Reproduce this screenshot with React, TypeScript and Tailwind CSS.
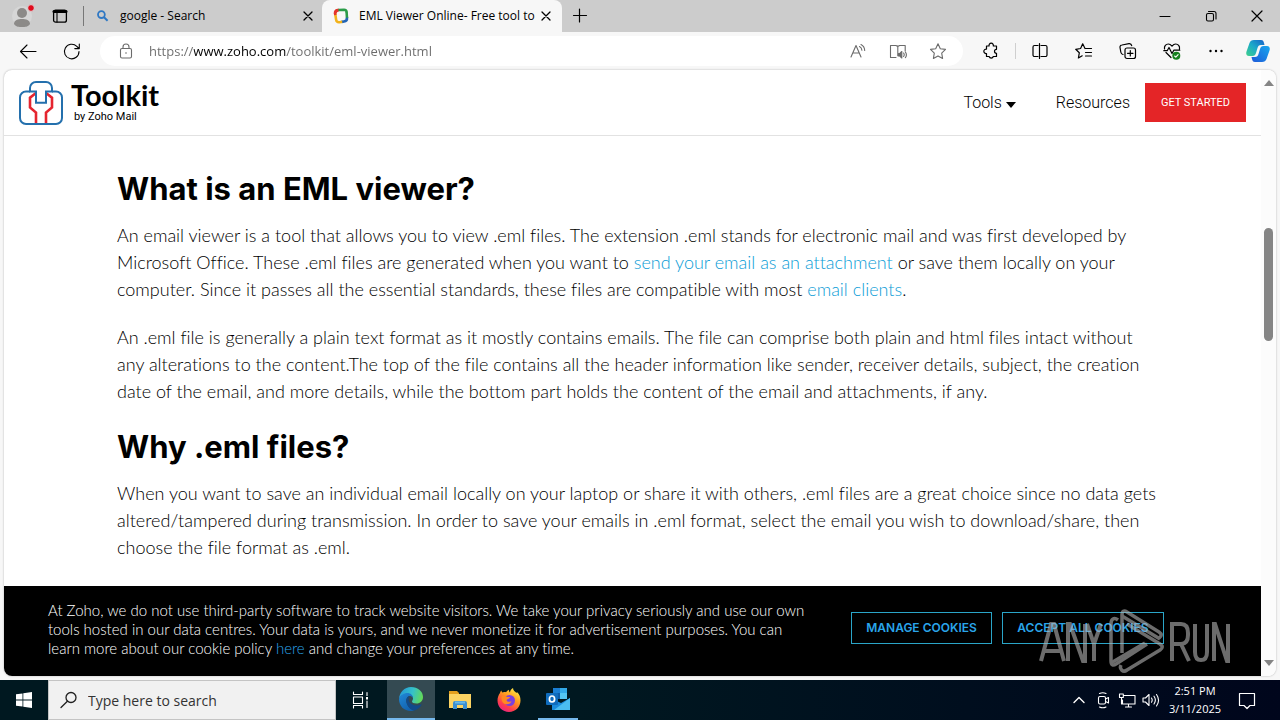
import type { ReactNode } from "react";

type IconProps = { children: ReactNode; className?: string; box?: string };

function Icon({ children, className = "size-5", box = "0 0 20 20" }: IconProps) {
  return (
    <svg
      viewBox={box}
      className={`shrink-0 ${className}`}
      fill="none"
      stroke="currentColor"
      strokeWidth="1.1"
      strokeLinecap="round"
      strokeLinejoin="round"
      aria-hidden="true"
    >
      {children}
    </svg>
  );
}

const CloseIcon = () => (
  <Icon className="size-3" box="0 0 12 12">
    <path d="M2 2l8 8M10 2l-8 8" strokeWidth="1.3" />
  </Icon>
);

function TabStrip() {
  return (
    <header className="flex h-8 shrink-0 bg-[#cccccc] text-black">
      <button aria-label="Profile" className="relative ml-3 flex w-6 items-center">
        <svg viewBox="0 0 24 28" className="h-7 w-6" aria-hidden="true">
          <circle cx="10" cy="14" r="10" fill="#d6d6d6" />
          <circle cx="10" cy="11" r="5" fill="#8c8a88" />
          <path d="M2 22c0-4 4-5 8-5s8 1 8 5c-2 3-5 3-8 3s-6 0-8-3z" fill="#8c8a88" />
          <circle cx="19" cy="6" r="3.4" fill="#e00b1c" stroke="#dcdcdc" />
        </svg>
      </button>
      <button aria-label="Tab actions menu" className="ml-4 flex items-center">
        <Icon className="size-4" box="0 0 16 16">
          <rect x="1.6" y="2.2" width="12.8" height="12" rx="2" strokeWidth="1.3" />
          <path d="M2 3.6h12" strokeWidth="3" />
          <path d="M5 5v9" />
        </Icon>
      </button>
      <span className="my-1.5 ml-[15px] w-px bg-[#777777]" />
      <div className="flex w-[238px] items-center pr-2 pl-3 text-xs">
        <svg viewBox="0 0 14 14" className="size-3.5 text-[#2f78c4]" fill="none" stroke="currentColor" aria-hidden="true">
          <circle cx="5.4" cy="5.6" r="3.4" strokeWidth="1.8" />
          <path d="M8 8.2l3.6 3.6" strokeWidth="2" />
        </svg>
        <span className="ml-2.5 flex-1 whitespace-nowrap">google - Search</span>
        <button aria-label="Close google - Search">
          <CloseIcon />
        </button>
      </div>
      <div className="flex w-60 items-center rounded-t-lg bg-[#f7f7f7] pr-2.5 pl-[11px] text-xs">
        <svg viewBox="0 0 16 16" className="size-4 shrink-0" fill="none" strokeWidth="2.6" aria-hidden="true">
          <path d="M2.2 5.4C2.6 3 4 2.2 6 1.9" stroke="#e5352c" />
          <path d="M5.4 2L11 1.8c1.800 0 2.600.8 2.700 2.600" stroke="#2a9c48" />
          <path d="M13.600 4l.4 6.200" stroke="#2a9c48" />
          <path d="M14 9.600c.2 2.400-.8 3.600-3 3.900L8.600 13.900" stroke="#2264b5" />
          <path d="M9.200 13.800l-2.600.4c-2 .2-3.200-.6-3.500-2.600L2.100 5" stroke="#f2b21b" />
          <path d="M2.400 7L2 5.200C2 3.600 3 2.300 4.600 2" stroke="#e5352c" />
        </svg>
        <span className="ml-2.5 flex-1 whitespace-nowrap">EML Viewer Online- Free tool to</span>
        <button aria-label="Close EML Viewer Online">
          <CloseIcon />
        </button>
      </div>
      <button aria-label="New tab" className="ml-2 flex items-center">
        <Icon className="size-5">
          <path d="M3.500 9.500h13M9.500 3v13" strokeWidth="1.2" />
        </Icon>
      </button>
      <div className="ml-auto flex items-center gap-[30px] pr-[15px]">
        <button aria-label="Minimize">
          <Icon className="size-4" box="0 0 16 16">
            <path d="M3 8.500h10" />
          </Icon>
        </button>
        <button aria-label="Restore">
          <Icon className="size-4" box="0 0 16 16">
            <rect x="3.500" y="5.500" width="7" height="7.500" rx="1.500" />
            <path d="M5.500 3.500h5.500a2 2 0 0 1 2 2v5.500" />
          </Icon>
        </button>
        <button aria-label="Close window">
          <Icon className="size-4" box="0 0 16 16">
            <path d="M3 3l10 10M13 3L3 13" strokeWidth="1.200" />
          </Icon>
        </button>
      </div>
    </header>
  );
}

function AddressBar() {
  return (
    <nav className="flex h-[38px] shrink-0 items-center bg-[#f7f7f7] pl-[18px] text-black" aria-label="Browser">
      <button aria-label="Back">
        <Icon>
          <path d="M18 10.500H2.500M9 4L2.500 10.500 9 17" />
        </Icon>
      </button>
      <button aria-label="Refresh" className="ml-6">
        <Icon>
          <path d="M17 10.500a7.300 7.300 0 1 1-2.200-5.200L17 7.500M17.300 3v4.600h-4.500" />
        </Icon>
      </button>
      <label className="ml-[18px] flex h-[30px] min-w-0 flex-1 items-center rounded-full bg-white pr-[15px] pl-4 text-[#6b6b6b]">
        <Icon>
          <rect x="4.500" y="7.500" width="11" height="9.500" rx="1.500" />
          <path d="M7 7.500V6a3 3 0 0 1 6 0v1.500" />
          <circle cx="10" cy="12" r=".8" fill="currentColor" stroke="none" />
        </Icon>
        <input
          aria-label="Address"
          defaultValue="https://www.zoho.com/toolkit/eml-viewer.html"
          className="ml-[13px] min-w-0 flex-1 bg-[linear-gradient(to_right,#6b6b6b_45px,#000_45px,#000_137px,#6b6b6b_137px)] bg-clip-text pt-px text-[13px] text-transparent outline-none"
        />
        <span className="flex items-center gap-5">
          <Icon>
            <path d="M3 16L8 4.500 13 16M4.700 12h6.600" />
            <path d="M11.500 5.500c1.500.8 2.300 2 2.400 3.700M13 3.500c2.300 1.200 3.600 3.200 3.700 6" />
          </Icon>
          <Icon>
            <path d="M9.800 4.800v10M8 16.500H2.500v-12H8l1.800 1 1.800-1h5.600V10" />
            <path d="M10.500 12.500h1.300l2-2v6.500l-2-2h-1.300z" fill="currentColor" />
            <path d="M15.600 12c.7 1 .7 2.500 0 3.500M17.400 11c1.200 1.800 1.200 4 0 5.600" />
          </Icon>
          <Icon>
            <path d="M10 2.800l2.300 4.900 5.200.7-3.800 3.700.9 5.300L10 14.900l-4.600 2.500.9-5.300-3.800-3.700 5.200-.7z" />
          </Icon>
        </span>
      </label>
      <div className="ml-[18px] flex items-center">
        <button aria-label="Extensions">
          <Icon>
            <path d="M5.500 5h2.600a2.200 2.200 0 1 1 4.200 0h3.200v3.300a2 2 0 1 0 0 4v3.200h-3.200a2.200 2.200 0 0 1-4.200 0H5.500v-3a2.200 2.200 0 1 1 0-4.300z" strokeWidth="1.200" />
          </Icon>
        </button>
        <span className="ml-3.5 h-4 w-px bg-[#cfcfcf]" />
        <button aria-label="Split screen" className="ml-3.5">
          <Icon>
            <path d="M8 4.500H4.500a1.500 1.500 0 0 0-1.500 1.500v8a1.500 1.500 0 0 0 1.500 1.500H8M11 4.500h4.500A1.500 1.500 0 0 1 17 6v8a1.500 1.500 0 0 1-1.500 1.500H11M9.500 2.500v15" strokeWidth="1.200" />
          </Icon>
        </button>
        <button aria-label="Favorites" className="ml-6">
          <Icon>
            <path d="M11 7.500L8.700 2.800 6.600 7.500l-4.900.8 3.600 3.500-.9 5.200 3.800-2.200M11 7.500h6.500M11.500 11.500h6M11.500 15h6" strokeWidth="1.200" />
          </Icon>
        </button>
        <button aria-label="Collections" className="ml-6">
          <Icon>
            <rect x="7" y="7" width="10.500" height="10.500" rx="2" strokeWidth="1.200" />
            <path d="M12.300 9.500v5.500M9.500 12.300H15M5 13.500C3 13 3 12 2.800 11L2 6.500C1.800 5 2.500 4.200 4 4l7-1.300c1.600-.2 2.400.5 2.700 2" strokeWidth="1.200" />
          </Icon>
        </button>
        <button aria-label="Browser essentials" className="ml-6">
          <Icon>
            <path d="M2.500 8c-.5-3 1.500-5 3.800-5C8 3 9 4 10 5.200 11 4 12 3 13.700 3c2.300 0 4.300 2 3.800 5M4 11.500l5 5M1.800 9.700h3.400L7 6.500l3 6 1.800-3.300h6" strokeWidth="1.200" />
            <circle cx="14.300" cy="14.700" r="4" fill="#16801f" stroke="none" />
            <path d="M12.600 15l1.200 1.100 2.300-2.500" stroke="#fff" />
          </Icon>
        </button>
        <button aria-label="Settings and more" className="ml-6">
          <Icon>
            <g fill="currentColor" stroke="none">
              <circle cx="4.500" cy="10" r="1.200" />
              <circle cx="10" cy="10" r="1.200" />
              <circle cx="15.500" cy="10" r="1.200" />
            </g>
          </Icon>
        </button>
        <button aria-label="Copilot" className="mr-2.5 ml-5">
          <svg viewBox="0 0 24 24" className="size-6" aria-hidden="true">
            <defs>
              <linearGradient id="cpa" x1="0" y1="1" x2="1" y2="0">
                <stop offset="0" stopColor="#3fd08b" />
                <stop offset=".5" stopColor="#1ba9c9" />
                <stop offset="1" stopColor="#1660c9" />
              </linearGradient>
              <linearGradient id="cpb" x1="0" y1="1" x2="1" y2="0">
                <stop offset="0" stopColor="#1d59d8" />
                <stop offset="1" stopColor="#18a7ee" />
              </linearGradient>
            </defs>
            <path d="M8 1h7c2 0 2.500 1 3 3l.5 2H15c-2 0-3 1-3.500 3l-1.500 5c-.6 2-1.500 3-3.500 3H3c-2.500 0-3.300-2-2.500-4.500L3.500 4C4.300 2 5.500 1 8 1z" fill="url(#cpa)" />
            <path d="M16 23H9c-2 0-2.500-1-3-3l-.5-2H9c2 0 3-1 3.500-3L14 10c.6-2 1.500-3 3.500-3H21c2.500 0 3.300 2 2.500 4.500L20.500 20c-.8 2-2 3-4.500 3z" fill="url(#cpb)" />
          </svg>
        </button>
      </div>
    </nav>
  );
}

function SiteHeader() {
  return (
    <header className="flex h-[66px] shrink-0 items-center border-b border-[#e2e2e2] px-[15px] text-black">
      <a href="#toolkit" className="flex items-center">
        <svg viewBox="0 0 44 44" className="size-11" fill="none" strokeWidth="2" aria-hidden="true">
          <path d="M17 43V31.500l-6-5v-9.800l6-4.700M27 43V31.500l6-5v-9.800L27 12" stroke="#e5252f" strokeWidth="2.600" />
          <g stroke="#2470ad">
            <path d="M11 10.500H7a6 6 0 0 0-6 6V37a6 6 0 0 0 6 6h30a6 6 0 0 0 6-6V16.500a6 6 0 0 0-6-6h-4" />
            <path d="M17 10.500h-6V7a6 6 0 0 1 6-6h10a6 6 0 0 1 6 6v3.500h-6v11.300H17z" />
          </g>
        </svg>
        <span className="ml-2 block">
          <span className="block text-[29px] leading-7 font-bold">Toolkit</span>
          <span className="block pl-[3px] font-[Roboto] text-[11px] leading-4">by Zoho Mail</span>
        </span>
      </a>
      <nav className="ml-auto flex items-center font-[Roboto] text-base leading-5 font-light" aria-label="Site">
        <button className="flex items-center gap-1">
          Tools
          <svg viewBox="0 0 10 6" className="mt-1 h-1.5 w-2.5" aria-hidden="true">
            <path d="M0 0h10L5 6z" />
          </svg>
        </button>
        <a href="#resources" className="ml-10">Resources</a>
        <a href="#start" className="ml-[15px] flex h-[39px] w-[101px] items-center justify-center bg-[#e42527] text-[11px] font-normal text-white">
          GET STARTED
        </a>
      </nav>
    </header>
  );
}

function Article() {
  return (
    <main className="px-[113px] pt-8 text-lg leading-[27px] font-light whitespace-nowrap text-black">
      <h1 className="font-[Inter] text-[31px] leading-[42px] font-bold">What is an EML viewer?</h1>
      <p className="mt-3">
        An email viewer is a tool that allows you to view .eml files. The extension .eml stands for electronic mail and was first developed by
        <br />
        Microsoft Office. These .eml files are generated when you want to{" "}
        <a href="#attachment" className="text-[#0a9cd6]">send your email as an attachment</a> or save them locally on your
        <br />
        computer. Since it passes all the essential standards, these files are compatible with most{" "}
        <a href="#clients" className="text-[#0a9cd6]">email clients</a>.
      </p>
      <p className="mt-[21px]">
        An .eml file is generally a plain text format as it mostly contains emails. The file can comprise both plain and html files intact without
        <br />
        any alterations to the content.The top of the file contains all the header information like sender, receiver details, subject, the creation
        <br />
        date of the email, and more details, while the bottom part holds the content of the email and attachments, if any.
      </p>
      <h2 className="mt-[21px] font-[Inter] text-[31px] leading-[42px] font-bold">Why .eml files?</h2>
      <p className="mt-3">
        When you want to save an individual email locally on your laptop or share it with others, .eml files are a great choice since no data gets
        <br />
        altered/tampered during transmission. In order to save your emails in .eml format, select the email you wish to download/share, then
        <br />
        choose the file format as .eml.
      </p>
    </main>
  );
}

function CookieBanner() {
  return (
    <section aria-label="Cookies" className="mt-auto flex h-[90px] shrink-0 bg-black pl-11 text-white">
      <p className="w-[803px] pt-[15px] text-[15px] leading-[19px] font-light whitespace-nowrap">
        At Zoho, we do not use third-party software to track website visitors. We take your privacy seriously and use our own
        <br />
        tools hosted in our data centres. Your data is yours, and we never monetize it for advertisement purposes. You can
        <br />
        learn more about our cookie policy <a href="#cookies" className="text-[#2aa5ea]">here</a> and change your preferences at any time.
      </p>
      <div className="flex gap-2.5 pt-[26px] font-[Inter] text-xs font-semibold text-[#2aa5ea]">
        <button className="h-8 w-[141px] border border-[#2aa5c8] whitespace-nowrap">MANAGE COOKIES</button>
        <button className="h-8 w-[162px] border border-[#2aa5c8] whitespace-nowrap">ACCEPT ALL COOKIES</button>
      </div>
    </section>
  );
}

function Scrollbar() {
  return (
    <div className="flex w-[15px] shrink-0 flex-col items-center bg-[#fcfcfc] py-2.5" aria-hidden="true">
      <svg viewBox="0 0 10 6" className="h-1.5 w-2.5" fill="#858585">
        <path d="M5 0l5 6H0z" />
      </svg>
      <span className="mt-[142px] h-[113px] w-[9px] rounded-full bg-[#858585]" />
      <svg viewBox="0 0 10 6" className="mt-auto h-1.5 w-2.5" fill="#858585">
        <path d="M5 6l5-6H0z" />
      </svg>
    </div>
  );
}

function Watermark() {
  return (
    <svg viewBox="0 0 196 64" className="pointer-events-none absolute right-[47px] bottom-[47px] h-16 w-[196px] opacity-60" fill="none" stroke="#b4b4b4" aria-hidden="true">
      <g strokeWidth="4">
        <path d="M4 52l10-37h3l10 37M8 42h15" />
        <path d="M31 52V15h2l13 37h2V15" />
        <path d="M50 15l7 20v17M64 15l-7 20" />
        <path d="M135 52V15h9c5 0 7 3 7 9v2c0 6-2 9-7 9h-9M144 35l8 17" />
        <path d="M158 15v28c0 5 2 8 6 8s6-3 6-8V15" />
        <path d="M177 52V15h1l12 37h1V15" />
      </g>
      <g strokeWidth="3.500" strokeLinejoin="round">
        <path d="M81 11c-4-3-7-1-7 4v37c0 4 2 5 5 3l31-20" />
        <path d="M85 44V6c0-4 2-5 5-3l32 20c3 2 3 4 0 6" />
        <path d="M85 7l38 23M74 54l34-20M84 56c-2 4 2 8 6 5l33-20c3-2 3-4 0-6L90 15" />
      </g>
    </svg>
  );
}

function Taskbar() {
  return (
    <footer className="flex h-10 shrink-0 bg-linear-to-r from-[#001820] from-45% to-[#00061c] text-white">
      <button aria-label="Start" className="flex w-12 items-center justify-center">
        <svg viewBox="0 0 16 16" className="size-4" fill="#fff" aria-hidden="true">
          <path d="M0 2.300l6.500-.9v6.200H0zM7.300 1.300L16 0v7.600H7.300zM0 8.400h6.500v6.200L0 13.700zM7.300 8.400H16V16l-8.700-1.300z" />
        </svg>
      </button>
      <label className="flex w-72 items-center border border-[#c4c4c4] bg-[#f1f1f1] pl-[11px] text-[#202020]">
        <Icon className="size-[18px]" box="0 0 18 18">
          <circle cx="11" cy="6.500" r="5" strokeWidth="1.300" />
          <path d="M7.400 10.200L1 16.500" strokeWidth="1.300" />
        </Icon>
        <input aria-label="Search" placeholder="Type here to search" className="ml-2.5 min-w-0 flex-1 pt-0.5 text-sm outline-none placeholder:text-[#333333]" />
      </label>
      <button aria-label="Task view" className="flex w-[51px] items-center justify-center pr-1">
        <Icon className="size-5">
          <path d="M3.500 2v2.500h9V2M3.500 18v-2.500h9V18M3.500 7h9v6.500h-9zM17 2.500v3M17 11v6.500" />
          <rect x="16" y="7" width="2" height="2.500" fill="currentColor" stroke="none" />
        </Icon>
      </button>
      <button aria-label="Microsoft Edge" className="flex w-12 items-center justify-center border-b-2 border-[#76b9ed] bg-[#344a52]">
        <svg viewBox="0 0 24 24" className="size-6" aria-hidden="true">
          <defs>
            <linearGradient id="ea" x1="0" y1=".3" x2="1" y2=".5">
              <stop offset="0" stopColor="#2497d8" />
              <stop offset=".55" stopColor="#35c1c9" />
              <stop offset="1" stopColor="#63d957" />
            </linearGradient>
            <linearGradient id="eb" x1="0" y1="0" x2=".6" y2="1">
              <stop offset="0" stopColor="#2189d8" />
              <stop offset="1" stopColor="#1261ae" />
            </linearGradient>
          </defs>
          <path d="M0 12C.5 5 5.500 0 12 0c7 0 12 4.500 12 10 0 4-3 6.500-6.500 6.500-3 0-4.500-1-4.500-2 0-.8 1-1.200 1-3C14 9 11.500 7 8.500 7 4 7 1 9.500 0 12z" fill="url(#ea)" />
          <path d="M0 12c1-3.500 4.500-6 8.500-6 3 0 5.500 2.300 5.500 5-1-1.500-2-2-3.500-2C7.500 9.500 6.500 13 8 17c1.300 3.500 4.500 6 7.500 6.500-1 .3-2.200.5-3.500.5C5 24 0 19 0 12z" fill="url(#eb)" />
          <path d="M10.500 9C7.500 10 6.500 13 8 17c1.500 4 5 6.500 7.500 6.500 3-1 5.500-3 7-5.500.3-.6-.2-.8-.8-.5-5.700 2.500-12.200-.5-12.200-5.500 0-1.300.4-2.300 1-3z" fill="#114a8b" />
        </svg>
      </button>
      <button aria-label="File Explorer" className="flex w-[50px] items-center justify-center">
        <svg viewBox="0 0 22 20" className="h-5 w-[22px]" aria-hidden="true">
          <path d="M0 1h8l2 2v3H0z" fill="#e39f1d" />
          <path d="M0 4h22v14H0z" fill="#fbd362" />
          <path d="M4 19v-6a2 2 0 0 1 2-2h10a2 2 0 0 1 2 2v6h-4v-4H8v4z" fill="#3a8ed0" />
          <path d="M6 11.500h10v2H6z" fill="#67b8e8" />
        </svg>
      </button>
      <button aria-label="Firefox" className="flex w-12 items-center justify-center">
        <svg viewBox="0 0 24 24" className="size-6" aria-hidden="true">
          <defs>
            <linearGradient id="fa" x1=".8" y1="0" x2=".2" y2="1">
              <stop offset="0" stopColor="#fff04a" />
              <stop offset=".4" stopColor="#ff9a1f" />
              <stop offset=".75" stopColor="#ff3b4e" />
              <stop offset="1" stopColor="#e3208c" />
            </linearGradient>
          </defs>
          <path d="M3 5c.2-1 .8-2 1.500-2.500 0 1 .5 1.600 1.300 2C7 4 8 4 9 4.200c.8-1.200 1.800-2 3-2.400-.2 1 .2 2 1 2.700C13 3 14 1 16 0c0 2.500 2.200 3.500 3.500 5 .3-.3.400-.7.400-1C22.500 6 23.500 9 23.500 12.500 23.500 19 18.500 24 12 24S.5 19 .5 12.500C.5 9.500 1.500 7 3 5z" fill="url(#fa)" />
          <circle cx="12.500" cy="12.500" r="5.500" fill="#7a3fe0" />
          <path d="M5 8c2-1 4-.5 5 1h3c-.3 1.500-2.500 2-3.500 3 .5 2 3 2.500 5 1-1 4-7 4.500-9 1C4.500 12 4 10 5 8z" fill="#ff8a22" />
        </svg>
      </button>
      <button aria-label="Outlook" className="ml-[5px] flex w-10 items-center justify-center border-b-2 border-[#76b9ed]">
        <svg viewBox="0 0 24 22" className="h-[22px] w-6" aria-hidden="true">
          <path d="M7 0h14v11H7z" fill="#1a7fd4" />
          <path d="M14 0h7v5h-7z" fill="#32a9e7" />
          <path d="M7 5h7v6H7z" fill="#0a5ba8" />
          <path d="M14 5h7v6h-7z" fill="#54c6f2" />
          <path d="M6 11l9 4 9-5v12H6z" fill="#1a8bdc" />
          <path d="M24 10v12H8z" fill="#4bbcf0" />
          <rect y="5" width="12" height="12" rx="1" fill="#0f6cbd" />
          <ellipse cx="6" cy="11" rx="2.600" ry="3" fill="none" stroke="#fff" strokeWidth="1.700" />
        </svg>
      </button>
      <div className="ml-auto flex items-center gap-1">
        <Icon>
          <path d="M5 12.500l5-5 5 5" strokeWidth="1.400" />
        </Icon>
        <Icon>
          <rect x="5.500" y="6.500" width="7" height="7.500" rx="1.500" />
          <path d="M12.500 9l3-1.500v5.500l-3-1.500M6.500 3.500c2-1 4.500-1 6.500 0M6.500 17c2 1 4.500 1 6.500 0" />
        </Icon>
        <Icon>
          <path d="M6.500 5.500H18v8.500H5.500V10M2.500 4h3.800v3.500H2.500zM4.500 8v6M11.500 14v3M8.500 17h6" />
        </Icon>
        <Icon>
          <path d="M2 8h2.500L8 4.500v11L4.500 12H2zM10.500 8c.8 1.200.8 3 0 4.200M13 6.200c1.700 2.400 1.700 5.400 0 7.800M15.500 4.500c2.500 3.500 2.500 8 0 11.500" />
        </Icon>
      </div>
      <div className="ml-[3px] flex w-[62px] flex-col justify-center text-center text-[11px] leading-[18px] whitespace-nowrap">
        <span>2:51 PM</span>
        <span>3/11/2025</span>
      </div>
      <button aria-label="Notifications" className="mr-[23px] ml-[11px] flex items-center">
        <Icon>
          <path d="M2.500 3.500h15v12H13l-3 3-3-3H2.500z" strokeWidth="1.200" />
        </Icon>
      </button>
    </footer>
  );
}

export default function App() {
  return (
    <div className="relative flex h-screen flex-col overflow-hidden bg-[#f7f7f7] font-['Open_Sans',sans-serif]">
      <TabStrip />
      <AddressBar />
      <div className="mx-1 mb-1 flex min-h-0 flex-1 overflow-hidden rounded-lg bg-white shadow-[0_0_2px_#aaaaaa]">
        <div className="flex min-w-0 flex-1 flex-col font-[Lato,sans-serif] [font-variant-ligatures:none]">
          <SiteHeader />
          <Article />
          <CookieBanner />
        </div>
        <Scrollbar />
      </div>
      <Taskbar />
      <Watermark />
    </div>
  );
}
